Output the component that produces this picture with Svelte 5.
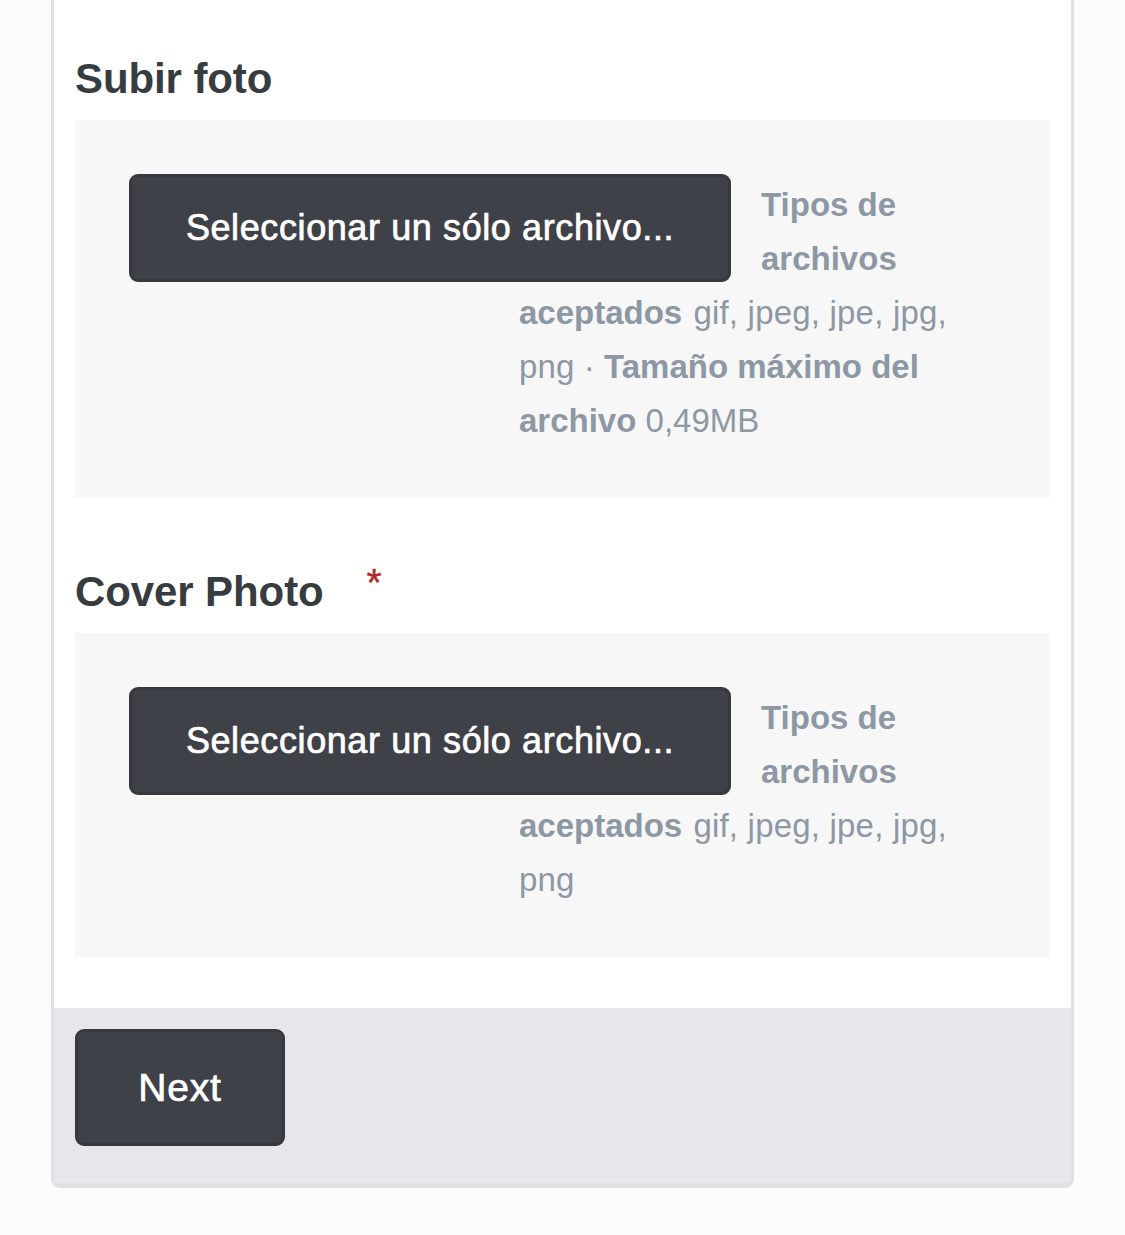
<script lang="ts">
	interface IUploadField {
		label: string;
		required: boolean;
		maxSize: string;
	}

	const types = 'gif, jpeg, jpe, jpg, png';
	const fields: IUploadField[] = [
		{ label: 'Subir foto', required: false, maxSize: '0,49MB' },
		{ label: 'Cover Photo', required: true, maxSize: '' }
	];
</script>

<form class="card" on:submit|preventDefault>
	<div class="fields">
		{#each fields as field}
			<section class="field">
				<div class="field-label">
					<span class="label-text">{field.label}</span>
					{#if field.required}
						<span class="required">*</span>
					{/if}
				</div>
				<div class="upload">
					<button type="button" class="button select">Seleccionar un sólo archivo...</button>
					<div class="info">
						<strong>Tipos de archivos aceptados</strong>
						<span class="types">{types}</span>
						{#if field.maxSize}
							· <strong>Tamaño máximo del archivo</strong> {field.maxSize}
						{/if}
					</div>
				</div>
			</section>
		{/each}
	</div>
	<footer>
		<button type="submit" class="button next">Next</button>
	</footer>
</form>

<style>
	:global(body) {
		background: #fcfcfc;
		font-family: 'Liberation Sans', Arial, sans-serif;
	}

	.card {
		box-sizing: border-box;
		width: 1023px;
		height: 1188px;
		margin-left: 51px;
		background: #fff;
		border: 3px solid #dfe0e1;
		border-top: 0;
		border-bottom-width: 5px;
		border-radius: 0 0 9px 9px;
		overflow: hidden;
	}

	.fields {
		box-sizing: border-box;
		height: 1008px;
		padding: 49px 21px 0;
	}

	.field {
		margin-bottom: 64px;
	}

	.field-label {
		display: flex;
		height: 60px;
		line-height: 60px;
		margin-bottom: 11px;
		color: #373c40;
	}

	.label-text {
		font-size: 42px;
		font-weight: bold;
		letter-spacing: -0.1px;
	}

	.required {
		height: 42px;
		line-height: 42px;
		margin-left: 43px;
		font-size: 39px;
		color: #b02b2c;
		-webkit-text-stroke: 0.4px #b02b2c;
	}

	.upload {
		display: flow-root;
		padding: 54px 54px 50px;
		background: #f7f7f7;
	}

	.button {
		box-sizing: border-box;
		padding: 0;
		border: 3px solid #37393e;
		border-radius: 9px;
		background: #3f4148;
		color: #fff;
		font-family: inherit;
		-webkit-text-stroke: 0.7px #fff;
	}

	.select {
		float: left;
		width: 602px;
		height: 108px;
		margin-right: 30px;
		font-size: 36px;
		letter-spacing: 0.6px;
	}

	.info {
		margin-top: 4px;
		margin-left: 390px;
		font-size: 33px;
		line-height: 54px;
		color: #8d98a4;
	}

	.types {
		margin-left: 2px;
		letter-spacing: 0.2px;
	}

	footer {
		height: 175px;
		padding: 21px;
		box-sizing: border-box;
		background: #e5e7eb;
	}

	.next {
		width: 210px;
		height: 117px;
		font-size: 39px;
		letter-spacing: 0.8px;
	}
</style>
